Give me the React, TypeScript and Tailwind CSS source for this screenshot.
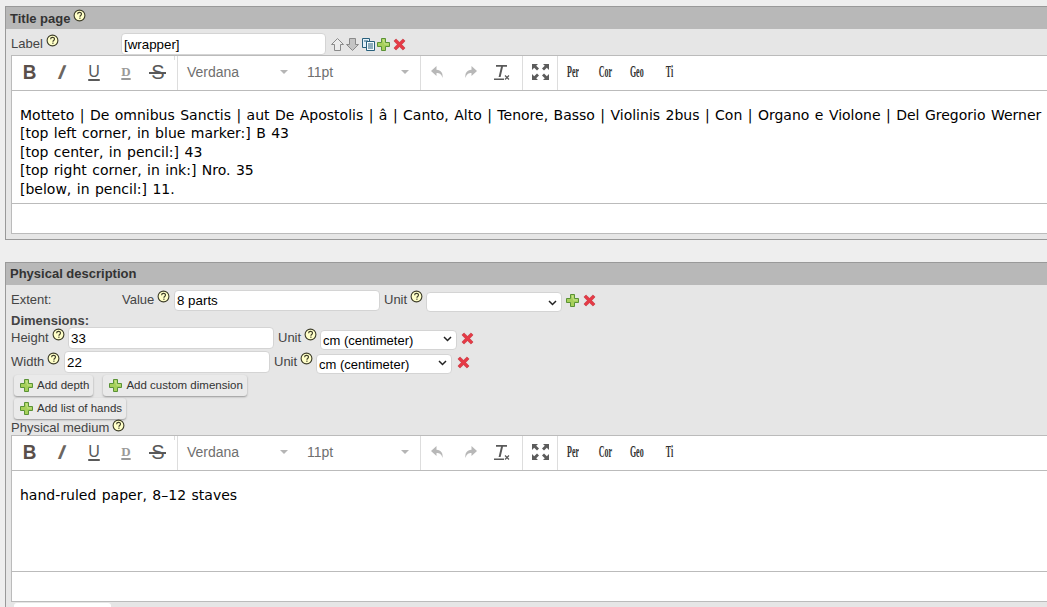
import React from 'react'

const HelpIcon = () => (
  <svg width="13" height="13" viewBox="0 0 13 13" className="shrink-0">
    <circle cx="6.5" cy="6.5" r="5.4" fill="#ffffc8" stroke="#3c3c28" strokeWidth="1.1" />
    <path d="M4.6 5.2c0-2.4 3.9-2.4 3.9-.1 0 1.3-1.6 1.4-1.6 2.6" fill="none" stroke="#3c3c28" strokeWidth="1.1" />
    <rect x="6.3" y="8.6" width="1.2" height="1.2" fill="#3c3c28" />
  </svg>
)

const PlusIcon = () => (
  <svg width="13" height="13" viewBox="0 0 13 13" className="shrink-0">
    <path d="M4.5.5h4v4h4v4h-4v4h-4v-4h-4v-4h4z" fill="#a6d05a" stroke="#5a9236" strokeWidth="1" />
    <path d="M5.5 1.5h2v4h4v1h-4" fill="#c8e48c" />
  </svg>
)

const CrossIcon = () => (
  <svg width="13" height="13" viewBox="0 0 14 14" className="shrink-0">
    <path d="M3.2 1 7 4.6 10.8 1 13 3.2 9.4 7 13 10.8 10.8 13 7 9.4 3.2 13 1 10.8 4.6 7 1 3.2z" fill="#e63a46" stroke="#c43a42" strokeWidth="0.7" />
  </svg>
)

const ArrowIcon = ({ down = false }: { down?: boolean }) => (
  <svg width="13" height="13" viewBox="0 0 13 13" className="shrink-0">
    <path
      d={down ? 'M3.5.5h6v6h3l-6 6-6-6h3z' : 'M6.5.5l6 6h-3v6h-6v-6h-3z'}
      fill={down ? '#c4c4c4' : '#ececec'}
      stroke="#8a8a8a"
      strokeWidth="1"
    />
  </svg>
)

const CopyIcon = () => (
  <svg width="13" height="13" viewBox="0 0 13 13" className="ml-px shrink-0">
    <path d="M.5 .5h7v9h-7z" fill="#e4f0f8" stroke="#28607c" />
    <path d="M4.5 3.5h8v9h-8z" fill="#f4fafc" stroke="#28607c" />
    <path d="M6 6h5M6 8h5M6 10h5M2 3h4" stroke="#28607c" strokeWidth="1" />
  </svg>
)

const ToolButton = ({ children }: { children: React.ReactNode }) => (
  <div className="flex h-[32px] w-8 shrink-0 items-center justify-center">{children}</div>
)

const Caret = () => <div className="h-0 w-0 border-x-[4px] border-t-[4px] border-x-transparent border-t-[#b5b5b5]" />

const Toolbar = () => (
  <div className="relative flex h-[35px] shrink-0 border-b border-[#bbb] text-[#595959]">
    <div className="absolute top-0 left-[162px] h-[4px] w-px bg-[#ddd]" />
    {/* text format */}
    <div className="flex w-[166px] shrink-0 border-r border-[#ddd] pl-[2px]">
      <ToolButton>
        <span className="scale-x-90 font-['Liberation_Sans',sans-serif] text-[21px] font-bold text-[#5a4f4a]">B</span>
      </ToolButton>
      <ToolButton>
        <span className="-skew-x-12 font-['Liberation_Sans',sans-serif] text-[20px] font-bold text-[#6b6560] italic">I</span>
      </ToolButton>
      <ToolButton>
        <span className="font-['Liberation_Sans',sans-serif] text-[16px] leading-[14px] text-[#595959] underline decoration-2 underline-offset-2">U</span>
      </ToolButton>
      <ToolButton>
        <span className="font-['Liberation_Serif',serif] text-[13px] leading-[10px] font-bold text-[#9a9a9a] underline decoration-2 underline-offset-2">D</span>
      </ToolButton>
      <ToolButton>
        <span className="relative font-['Liberation_Sans',sans-serif] text-[20px] leading-[20px] text-[#595959]">
          S
          <span className="absolute top-[10px] left-[-2px] h-[1.5px] w-[17px] bg-[#595959]" />
        </span>
      </ToolButton>
    </div>
    {/* font + size */}
    <div className="flex w-[243px] shrink-0 items-center border-r border-[#ddd] pb-[2px] font-['Liberation_Sans',sans-serif] text-[14px] text-[#6f6f6f]">
      <span className="ml-[9px] w-[93px]">Verdana</span>
      <Caret />
      <span className="ml-[19px] w-[94px]">11pt</span>
      <Caret />
    </div>
    {/* history */}
    <div className="flex w-[102px] shrink-0 border-r border-[#ddd] pl-[1px]">
      <ToolButton>
        <svg width="16" height="15" viewBox="0 0 16 15">
          <path d="M6.5 1 1 6l5.5 5V8c3 0 5 1 6 5 .8-5-1.5-8-6-8.3z" fill="#b8b8b8" />
        </svg>
      </ToolButton>
      <ToolButton>
        <svg width="16" height="15" viewBox="0 0 16 15">
          <path d="M9.5 1 15 6l-5.5 5V8c-3 0-5 1-6 5-.8-5 1.5-8 6-8.3z" fill="#b8b8b8" />
        </svg>
      </ToolButton>
      <ToolButton>
        <svg width="16" height="17" viewBox="0 0 16 17">
          <path d="M2 1h11v1.8H9L6.6 13H4.6L7 2.8H2zM0 14.4h10V16H0z" fill="#595959" />
          <path d="m11 11.5 4 4m0-4-4 4" stroke="#595959" strokeWidth="1.2" />
        </svg>
      </ToolButton>
    </div>
    {/* fullscreen */}
    <div className="flex w-[35px] shrink-0 items-center justify-center border-r border-[#ddd] pb-[2px]">
      <svg width="17" height="16" viewBox="0 0 17 16">
        <path d="M0 0h6L4.2 1.8 7 4.6 5 6.6 2.2 3.8 0 6zM17 0h-6l1.8 1.8L10 4.6l2 2 2.8-2.8L17 6zM0 16h6l-1.8-1.8L7 11.4l-2-2-2.8 2.8L0 10zM17 16h-6l1.8-1.8-2.8-2.8 2-2 2.8 2.8L17 10z" fill="#5c5c5c" />
      </svg>
    </div>
    {/* custom buttons */}
    <div className="-ml-px flex items-center pb-[2px] font-['Liberation_Serif',serif] text-[16px] font-bold text-[#333]">
      {['Per', 'Cor', 'Geo', 'Ti'].map((label) => (
        <div key={label} className="w-8 shrink-0 text-center">
          <span className="inline-block scale-x-50">{label}</span>
        </div>
      ))}
    </div>
  </div>
)

const Editor = ({ lines, bodyHeight }: { lines: string[]; bodyHeight: string }) => (
  <div className="ml-[5px] flex flex-col border-y border-l border-[#bbb] bg-white">
    <Toolbar />
    <div className={`${bodyHeight} border-b border-[#bbb] pt-[15px] pl-2 font-['DejaVu_Sans',sans-serif] text-[14px] leading-[18.4px] whitespace-nowrap text-black [word-spacing:1px]`}>
      {lines.map((line) => (
        <div key={line}>{line}</div>
      ))}
    </div>
    <div className="h-[29px]" />
  </div>
)

const AddButton = ({ label }: { label: string }) => (
  <button className="flex h-[21px] items-center gap-[4px] rounded-[3px] bg-[#eaeaea] pr-[4px] pl-[6px] text-[11.5px] text-[#333] shadow-[0_1px_2px_rgba(0,0,0,0.35)]">
    <PlusIcon />
    {label}
  </button>
)

const TextInput = ({ value, width, height = 'h-[22px]' }: { value: string; width: string; height?: string }) => (
  <input
    readOnly
    value={value}
    className={`${width} ${height} shrink-0 rounded-[4px] border border-[#d4d4d4] bg-white px-[2px] text-[13.33px] text-black`}
  />
)

const UnitSelect = ({ value, width, offset = '' }: { value: string; width: string; offset?: string }) => (
  <div className={`relative ${width} ${offset} h-[20px] shrink-0`}>
    <select
      value={value}
      onChange={() => {}}
      className="h-full w-full appearance-none rounded-[4px] border border-[#d4d4d4] bg-white pl-[2px] text-[13px] text-black"
    >
      <option value=""></option>
      <option value="cm">cm (centimeter)</option>
    </select>
    <svg width="9" height="6" viewBox="0 0 9 6" className="absolute top-[8px] right-[5px]">
      <path d="m1 1 3.5 3.5L8 1" fill="none" stroke="#222" strokeWidth="1.5" />
    </svg>
  </div>
)

const Label = ({ text, className = '' }: { text: string; className?: string }) => (
  <span className={`inline-flex shrink-0 items-start gap-[3px] text-[13px] text-[#444] ${className}`}>
    {text}
    <HelpIcon />
  </span>
)

const App = () => {
  return (
    <div className="h-[607px] w-[1047px] overflow-hidden bg-[#eeeeee] pt-[6px] pl-[5px] font-['Liberation_Sans',Arial,sans-serif]">
      {/* Title page */}
      <section className="h-[234px] w-[1100px] border border-[#999] bg-[#e6e6e6]">
        <h2 className="flex h-[22px] items-start gap-[3px] bg-[#b8b8b8] pt-[2px] pl-[4px] text-[13px] font-bold text-[#333]">
          Title page
          <HelpIcon />
        </h2>
        <div className="flex h-[26px] items-center pt-[4px] pl-[5px]">
          <Label text="Label" className="w-[110px]" />
          <TextInput value="[wrapper]" width="w-[205px]" />
          <div className="ml-[5px] flex items-center gap-[2px]">
            <ArrowIcon />
            <ArrowIcon down />
            <CopyIcon />
            <PlusIcon />
            <div className="ml-px flex">
              <CrossIcon />
            </div>
          </div>
        </div>
        <Editor
          bodyHeight="h-[113px]"
          lines={[
            'Motteto | De omnibus Sanctis | aut De Apostolis | â | Canto, Alto | Tenore, Basso | Violinis 2bus | Con | Organo e Violone | Del Gregorio Werner',
            '[top left corner, in blue marker:] B 43',
            '[top center, in pencil:] 43',
            '[top right corner, in ink:] Nro. 35',
            '[below, in pencil:] 11.',
          ]}
        />
      </section>

      {/* Physical description */}
      <section className="mt-[22px] h-[400px] w-[1100px] border border-[#999] bg-[#e6e6e6]">
        <h2 className="flex h-[22px] items-center bg-[#b8b8b8] pl-[4px] text-[13px] font-bold text-[#333]">
          Physical description
        </h2>
        <div className="flex h-[24px] items-center pt-[6px] pl-[5px] text-[13px] text-[#444]">
          <span className="w-[111px]">Extent:</span>
          <Label text="Value" className="w-[52px]" />
          <TextInput value="8 parts" width="w-[206px]" height="h-[21px]" />
          <Label text="Unit" className="ml-[4px] w-[42px]" />
          <UnitSelect value="" width="w-[136px]" offset="mt-[3px]" />
          <div className="ml-[4px] flex gap-[4px]">
            <PlusIcon />
            <CrossIcon />
          </div>
        </div>
        <div className="mt-[5px] pl-[5px] text-[13px] leading-[13px] font-bold text-[#444]">Dimensions:</div>
        <div className="flex h-[22px] items-center pl-[5px]">
          <Label text="Height" className="w-[57px]" />
          <TextInput value="33" width="w-[206px]" />
          <Label text="Unit" className="ml-[4px] w-[42px]" />
          <UnitSelect value="cm" width="w-[137px]" />
          <div className="ml-[4px] flex">
            <CrossIcon />
          </div>
        </div>
        <div className="mt-[2px] flex h-[22px] items-center pl-[5px]">
          <Label text="Width" className="w-[53px]" />
          <TextInput value="22" width="w-[206px]" />
          <Label text="Unit" className="ml-[4px] w-[42px]" />
          <UnitSelect value="cm" width="w-[136px]" />
          <div className="ml-[5px] flex">
            <CrossIcon />
          </div>
        </div>
        <div className="mt-[2px] flex gap-[10px] pl-[8px]">
          <AddButton label="Add depth" />
          <AddButton label="Add custom dimension" />
        </div>
        <div className="mt-[2px] pl-[8px]">
          <AddButton label="Add list of hands" />
        </div>
        <div className="h-[16px] pl-[5px] leading-[16px]">
          <Label text="Physical medium" className="leading-[17px]" />
        </div>
        <Editor bodyHeight="h-[101px]" lines={['hand-ruled paper, 8–12 staves']} />
        <div className="mt-[1px] ml-[8px] h-[6px] w-[97px] rounded-t-[3px] bg-white" />
      </section>
    </div>
  )
}

export default App
